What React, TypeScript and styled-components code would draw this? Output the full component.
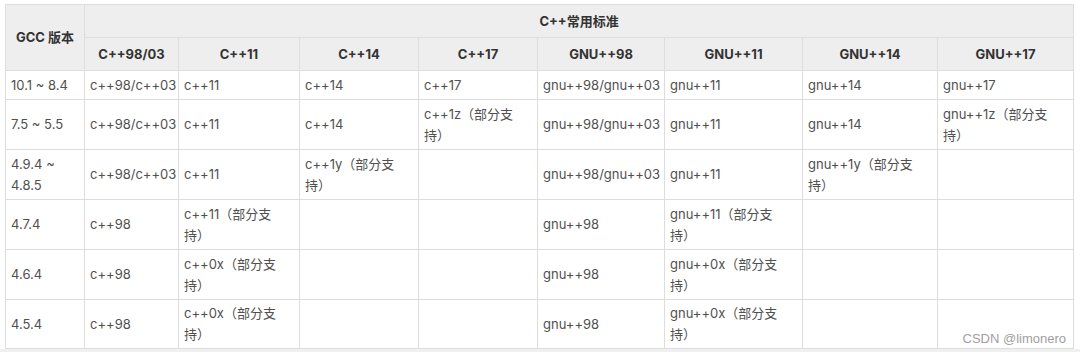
import React from "react";
import styled, { createGlobalStyle } from "styled-components";

const GlobalStyle = createGlobalStyle`
  html, body {
    margin: 0;
    padding: 0;
    background: #ffffff;
  }
  body {
    font-family: Inter, "Noto Sans CJK SC", sans-serif;
  }
`;

const Page = styled.div`
  width: 1080px;
  height: 352px;
  display: flex;
  flex-direction: column;
  overflow: hidden;
`;

const TableArea = styled.div`
  position: relative;
  padding: 4px 7px 0 5px;
`;

const Table = styled.table`
  width: 1068px;
  border-collapse: collapse;
  table-layout: fixed;
  font-size: 13px;
  line-height: 21px;
  color: #505050;
  text-spacing-trim: space-all;
`;

const Row = styled.tr<{ $h: number }>`
  height: ${(p) => p.$h}px;
`;

const HeadCell = styled.th`
  background: #eeeeee;
  border: 1px solid #dddddd;
  color: #333333;
  font-weight: 700;
  text-align: center;
  vertical-align: middle;
  padding: 0 5px;
`;

const Cell = styled.td<{ $wrap: boolean }>`
  border: 1px solid #dddddd;
  background: #ffffff;
  vertical-align: middle;
  text-align: left;
  padding: 0 5px;
  white-space: ${(p) => (p.$wrap ? "normal" : "nowrap")};
  overflow: visible;
`;

const Watermark = styled.div`
  position: absolute;
  right: 14px;
  bottom: 3px;
  font-family: "Liberation Sans", Arial, sans-serif;
  font-size: 13px;
  color: #a0a0a0;
`;

const BottomStrip = styled.div`
  flex: 1;
  background: #f0f0f0;
`;

const widths = [79, 94, 121, 119, 119, 127, 138, 135, 136];
const stdHeads = ["C++98/03", "C++11", "C++14", "C++17", "GNU++98", "GNU++11", "GNU++14", "GNU++17"];
const rowHeights = [29, 50, 50, 50, 50, 49];

const P = "（部分支持）";

const rows: string[][] = [
  ["10.1 ~ 8.4", "c++98/c++03", "c++11", "c++14", "c++17", "gnu++98/gnu++03", "gnu++11", "gnu++14", "gnu++17"],
  ["7.5 ~ 5.5", "c++98/c++03", "c++11", "c++14", "c++1z" + P, "gnu++98/gnu++03", "gnu++11", "gnu++14", "gnu++1z" + P],
  ["4.9.4 ~ 4.8.5", "c++98/c++03", "c++11", "c++1y" + P, "", "gnu++98/gnu++03", "gnu++11", "gnu++1y" + P, ""],
  ["4.7.4", "c++98", "c++11" + P, "", "", "gnu++98", "gnu++11" + P, "", ""],
  ["4.6.4", "c++98", "c++0x" + P, "", "", "gnu++98", "gnu++0x" + P, "", ""],
  ["4.5.4", "c++98", "c++0x" + P, "", "", "gnu++98", "gnu++0x" + P, "", ""],
];

export default function App() {
  return (
    <>
      <GlobalStyle />
      <Page>
        <TableArea>
          <Table>
            <colgroup>
              {widths.map((w, i) => (
                <col key={i} style={{ width: w }} />
              ))}
            </colgroup>
            <thead>
              <Row $h={33}>
                <HeadCell rowSpan={2}>GCC 版本</HeadCell>
                <HeadCell colSpan={8}>C++常用标准</HeadCell>
              </Row>
              <Row $h={33}>
                {stdHeads.map((h) => (
                  <HeadCell key={h}>{h}</HeadCell>
                ))}
              </Row>
            </thead>
            <tbody>
              {rows.map((r, i) => (
                <Row key={i} $h={rowHeights[i]}>
                  {r.map((c, j) => (
                    <Cell key={j} $wrap={j === 0 || c.includes("（")}>
                      {c}
                    </Cell>
                  ))}
                </Row>
              ))}
            </tbody>
          </Table>
          <Watermark>CSDN @limonero</Watermark>
        </TableArea>
        <BottomStrip />
      </Page>
    </>
  );
}
